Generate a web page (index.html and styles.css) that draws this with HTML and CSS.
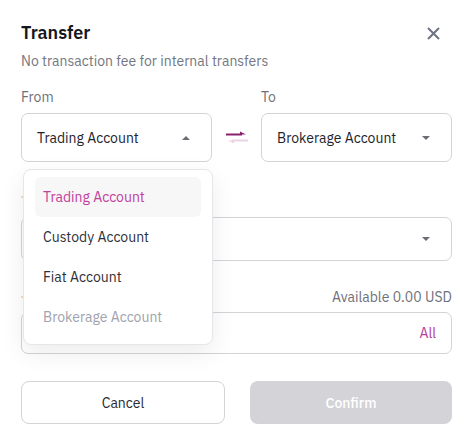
FILE: index.html
```html
<!DOCTYPE html>
<html>
<head>
<meta charset="utf-8">
<link rel="stylesheet" href="styles.css">
</head>
<body>
<div class="modal">
  <div class="header">
    <h1 class="title">Transfer</h1>
    <button class="close" aria-label="Close">
      <svg width="13" height="13" viewBox="0 0 13 13"><path d="M1 1 L12 12 M12 1 L1 12" stroke="#6e7380" stroke-width="2" fill="none"/></svg>
    </button>
  </div>
  <p class="subtitle">No transaction fee for internal transfers</p>

  <div class="accounts">
    <div class="field">
      <div class="label">From</div>
      <div class="select-wrap">
        <div class="select">
          <span>Trading Account</span>
          <span class="caret up"></span>
        </div>
        <div class="menu">
          <div class="item active">Trading Account</div>
          <div class="item">Custody Account</div>
          <div class="item">Fiat Account</div>
          <div class="item disabled">Brokerage Account</div>
        </div>
      </div>
    </div>
    <div class="swap">
      <svg width="22" height="14" viewBox="0 0 22 14">
        <path d="M0 3.5 H16" stroke="#8a1f6e" stroke-width="2"/>
        <path d="M14 0.5 L20 3.5 L14 3.5 Z" fill="#8a1f6e"/>
        <path d="M22 9.5 H6" stroke="#ecd3e4" stroke-width="2"/>
        <path d="M8 9.5 L2 9.5 L8 12.5 Z" fill="#ecd3e4"/>
      </svg>
    </div>
    <div class="field">
      <div class="label">To</div>
      <div class="select">
        <span>Brokerage Account</span>
        <span class="caret"></span>
      </div>
    </div>
  </div>

  <div class="spacer-label"><span class="sliver"></span></div>
  <div class="select wide">
    <span></span>
    <span class="caret"></span>
  </div>

  <div class="amount-head">
    <span class="sliver"></span>
    <span class="available">Available 0.00 USD</span>
  </div>
  <div class="input">
    <span></span>
    <span class="all">All</span>
  </div>

  <div class="actions">
    <button class="btn cancel">Cancel</button>
    <button class="btn confirm" disabled>Confirm</button>
  </div>
</div>
</body>
</html>
```

FILE: styles.css
```css
* { box-sizing: border-box; }
html, body { margin: 0; padding: 0; background: #fff; }
body {
  font-family: "IBM Plex Sans", "Noto Sans", "Open Sans", sans-serif;
  color: #2a2a33;
  width: 476px;
  height: 446px;
  overflow: hidden;
}
.modal {
  padding: 21px 24px 0 21px;
}
.header {
  display: flex;
  justify-content: space-between;
  align-items: center;
  height: 24px;
}
.title {
  margin: 0;
  font-size: 18px;
  font-weight: 600;
  color: #16161d;
  line-height: 24px;
}
.close {
  border: 0;
  background: none;
  padding: 0;
  width: 13px;
  height: 13px;
  margin-right: 12px;
  display: flex;
}
.subtitle {
  margin: 6px 0 0;
  font-size: 14px;
  line-height: 20px;
  color: #747681;
}
.accounts {
  display: flex;
  align-items: flex-end;
  margin-top: 16px;
}
.field { width: 191px; }
.label {
  font-size: 14px;
  line-height: 20px;
  color: #6f7079;
}
.select-wrap { position: relative; }
.select {
  margin-top: 6px;
  height: 49px;
  border: 1px solid #d3d3d8;
  border-radius: 7px;
  display: flex;
  align-items: center;
  justify-content: space-between;
  padding: 0 21px 0 15px;
  font-size: 14px;
  color: #23232b;
  background: #fff;
}
.caret {
  width: 0; height: 0;
  border-left: 4px solid transparent;
  border-right: 4px solid transparent;
  border-top: 4px solid #6c6c74;
}
.caret.up {
  border-top: 0;
  border-bottom: 4px solid #6c6c74;
}
.swap {
  width: 49px;
  height: 49px;
  display: flex;
  align-items: center;
  justify-content: center;
}
.menu {
  position: absolute;
  left: 2px;
  top: 56px;
  width: 190px;
  background: #fff;
  border: 1px solid #e6e6ea;
  border-radius: 8px;
  box-shadow: 0 8px 24px rgba(0,0,0,0.08);
  padding: 7px 11px;
  z-index: 10;
}
.item {
  height: 40px;
  line-height: 40px;
  padding-left: 8px;
  font-size: 14px;
  color: #2f2f37;
  border-radius: 6px;
}
.item.active { background: #f7f7f8; color: #c2409c; }
.item.disabled { color: #a0a2ad; }
.spacer-label { margin-top: 25px; height: 20px; display: flex; align-items: center; }
.sliver { display: block; width: 3px; height: 2px; background: #f1dcc0; }
.select.wide {
  height: 44px;
  margin-top: 10px;
  border-radius: 7px;
}
.amount-head {
  display: flex;
  justify-content: space-between;
  align-items: center;
  margin-top: 26px;
  font-size: 14px;
  line-height: 20px;
}
.available { color: #6f7079; }
.input {
  margin-top: 5px;
  height: 42px;
  border: 1px solid #d3d3d8;
  border-radius: 7px;
  display: flex;
  align-items: center;
  justify-content: space-between;
  padding: 0 15px;
}
.all { font-size: 14px; color: #b8409a; }
.actions {
  display: flex;
  gap: 25px;
  margin-top: 27px;
}
.btn {
  height: 43px;
  border-radius: 8px;
  font-family: inherit;
  font-size: 14px;
}
.cancel {
  width: 204px;
  background: #fff;
  border: 1px solid #d3d3d8;
  color: #2a2a33;
}
.confirm {
  flex: 1;
  background: #d3d3d8;
  border: 0;
  color: #fff;
  font-weight: 500;
}
```
